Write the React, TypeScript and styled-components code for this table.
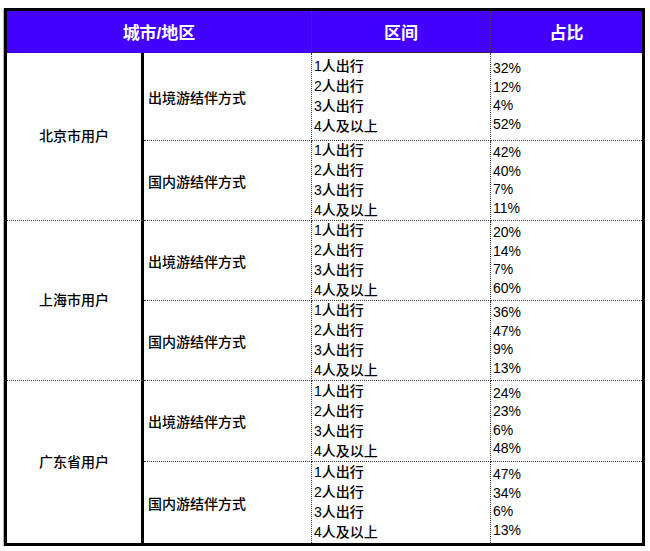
import styled, { createGlobalStyle } from "styled-components";

const GlobalStyle = createGlobalStyle`
  body {
    margin: 0;
    background: #fff;
    font-family: "Liberation Sans", "Noto Sans CJK SC", sans-serif;
    color: #000;
  }
`;

const Page = styled.main`
  padding: 8px 0 0 4px;
`;

const Table = styled.div`
  box-sizing: border-box;
  width: 641px;
  height: 538px;
  border: 3px solid #000;
  box-shadow: -1px 1px 0 #b5b5b5;
  display: grid;
  grid-template-columns: 137px 168px 179px 151px;
  grid-template-rows: 42px 88px 80px 80px 80px 81px 81px;
`;

const HeadCell = styled.div<{ $span?: number; $last?: boolean }>`
  grid-column: span ${(p) => p.$span ?? 1};
  background: #4400ff;
  color: #fff;
  font-weight: bold;
  font-size: 17px;
  display: flex;
  align-items: center;
  justify-content: center;
  border-bottom: 1px dotted #2a2a2a;
  border-right: ${(p) => (p.$last ? "none" : "1px dotted #444")};
  box-sizing: border-box;
`;

const CityCell = styled.div<{ $last?: boolean }>`
  grid-row: span 2;
  box-sizing: border-box;
  border-right: 3px solid #000;
  border-bottom: ${(p) => (p.$last ? "none" : "1px dotted #333")};
  display: flex;
  align-items: center;
  justify-content: center;
  font-size: 14px;
  font-weight: 500;
  padding-bottom: 3px;
`;

const Cell = styled.div<{ $bottom?: boolean; $right?: boolean }>`
  box-sizing: border-box;
  border-bottom: ${(p) => (p.$bottom ? "1px dotted #333" : "none")};
  border-right: ${(p) => (p.$right ? "1px dotted #333" : "none")};
  display: flex;
  flex-direction: column;
  justify-content: center;
  font-size: 14px;
  font-weight: 500;
`;

const Label = styled(Cell)`
  padding-left: 4px;
`;

const Lines = styled(Cell)<{ $lh: number }>`
  padding-left: 2px;
  padding-bottom: 1px;
  line-height: ${(p) => p.$lh}px;
`;

const groups = [
  {
    city: "北京市用户",
    rows: [
      { kind: "出境游结伴方式", pct: [32, 12, 4, 52] },
      { kind: "国内游结伴方式", pct: [42, 40, 7, 11] },
    ],
  },
  {
    city: "上海市用户",
    rows: [
      { kind: "出境游结伴方式", pct: [20, 14, 7, 60] },
      { kind: "国内游结伴方式", pct: [36, 47, 9, 13] },
    ],
  },
  {
    city: "广东省用户",
    rows: [
      { kind: "出境游结伴方式", pct: [24, 23, 6, 48] },
      { kind: "国内游结伴方式", pct: [47, 34, 6, 13] },
    ],
  },
];

const ranges = ["1人出行", "2人出行", "3人出行", "4人及以上"];

const App = () => {
  return (
    <Page>
      <GlobalStyle />
      <Table>
        <HeadCell $span={2}>城市/地区</HeadCell>
        <HeadCell>区间</HeadCell>
        <HeadCell $last>占比</HeadCell>

        {groups.map((g, gi) => {
          const lastGroup = gi === groups.length - 1;
          return g.rows.map((r, ri) => {
            const bottom = !(lastGroup && ri === g.rows.length - 1);
            return [
              ri === 0 && (
                <CityCell key={g.city} $last={lastGroup}>
                  {g.city}
                </CityCell>
              ),
              <Label key={`${g.city}-k${ri}`} $bottom={bottom} $right>
                {r.kind}
              </Label>,
              <Lines key={`${g.city}-r${ri}`} $lh={20} $bottom={bottom} $right>
                {ranges.map((t) => (
                  <div key={t}>{t}</div>
                ))}
              </Lines>,
              <Lines key={`${g.city}-p${ri}`} $lh={18.5} $bottom={bottom}>
                {r.pct.map((v, i) => (
                  <div key={i}>{v}%</div>
                ))}
              </Lines>,
            ];
          });
        })}
      </Table>
    </Page>
  );
};

export default App;
